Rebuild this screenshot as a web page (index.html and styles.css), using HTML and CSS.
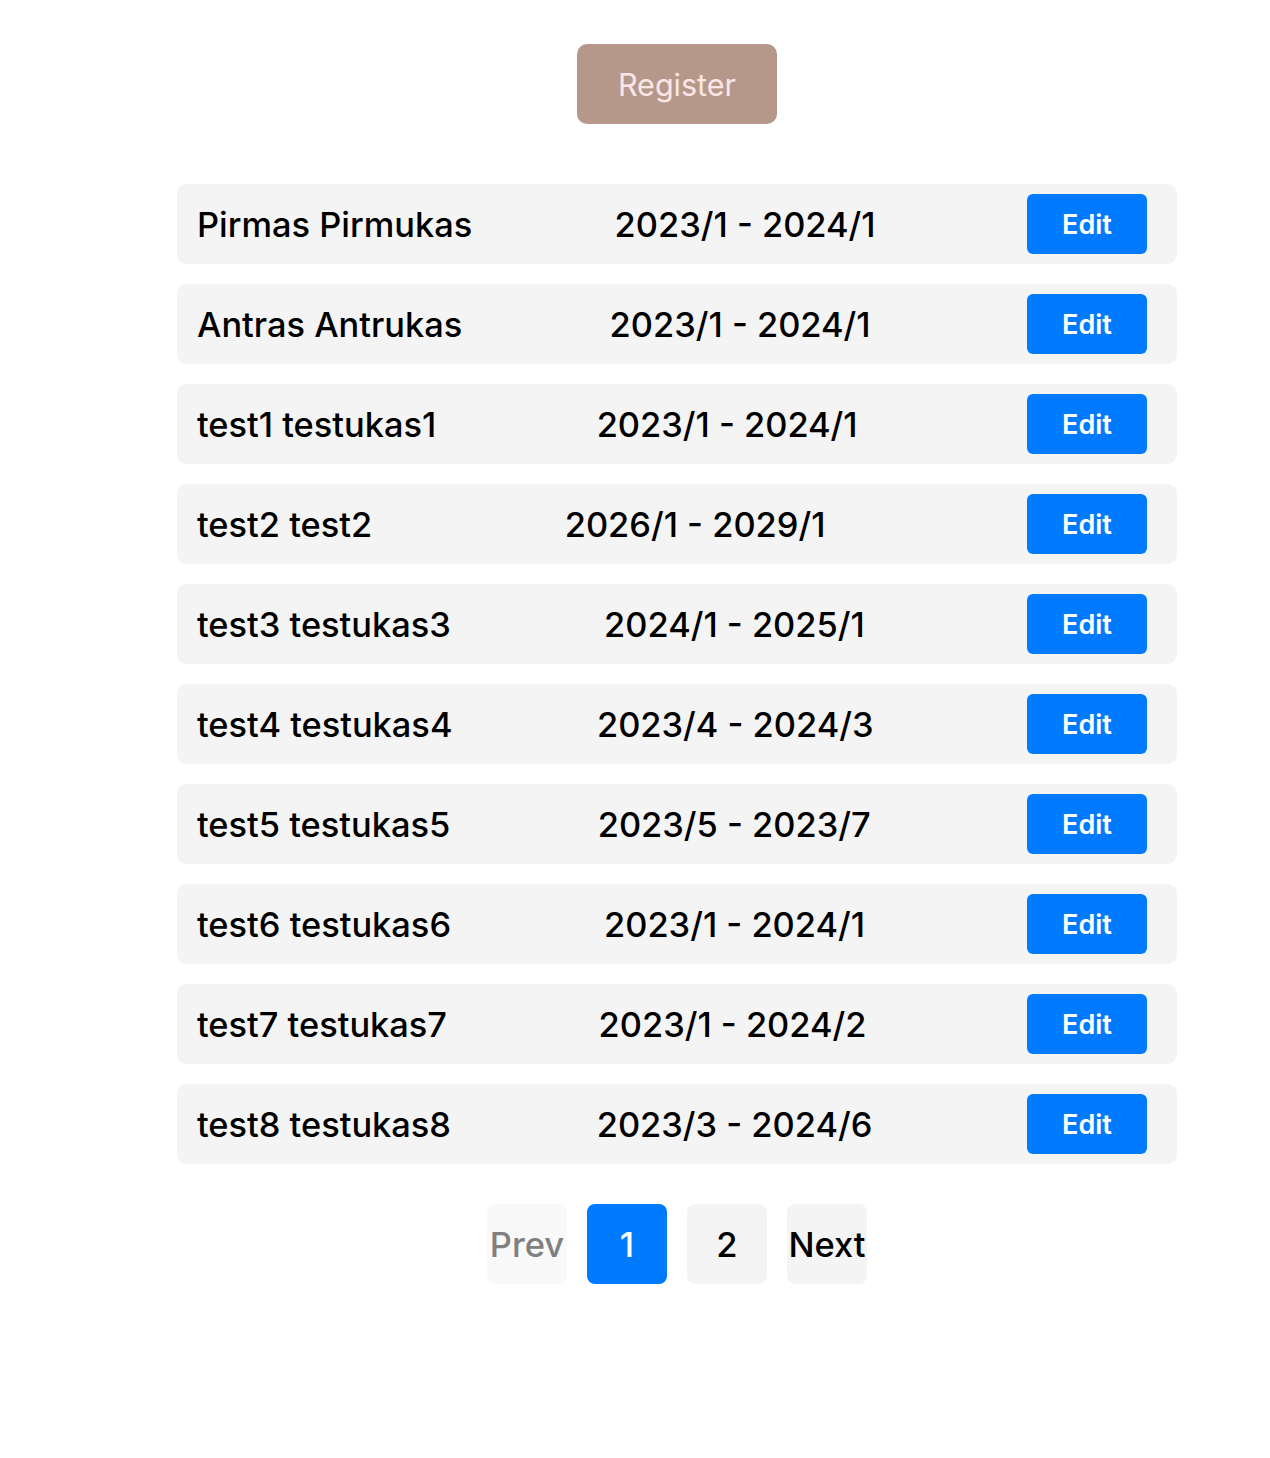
FILE: index.html
```html
<!DOCTYPE html>
<html>
<head>
<meta charset="utf-8">
<link rel="stylesheet" href="styles.css">
</head>
<body>
<main class="page">
  <button class="register">Register</button>
  <ul class="list">
    <li class="row"><span class="name">Pirmas Pirmukas</span><span class="dates">2023/1 - 2024/1</span><button class="edit">Edit</button></li>
    <li class="row"><span class="name">Antras Antrukas</span><span class="dates">2023/1 - 2024/1</span><button class="edit">Edit</button></li>
    <li class="row"><span class="name">test1 testukas1</span><span class="dates">2023/1 - 2024/1</span><button class="edit">Edit</button></li>
    <li class="row"><span class="name">test2 test2</span><span class="dates">2026/1 - 2029/1</span><button class="edit">Edit</button></li>
    <li class="row"><span class="name">test3 testukas3</span><span class="dates">2024/1 - 2025/1</span><button class="edit">Edit</button></li>
    <li class="row"><span class="name">test4 testukas4</span><span class="dates">2023/4 - 2024/3</span><button class="edit">Edit</button></li>
    <li class="row"><span class="name">test5 testukas5</span><span class="dates">2023/5 - 2023/7</span><button class="edit">Edit</button></li>
    <li class="row"><span class="name">test6 testukas6</span><span class="dates">2023/1 - 2024/1</span><button class="edit">Edit</button></li>
    <li class="row"><span class="name">test7 testukas7</span><span class="dates">2023/1 - 2024/2</span><button class="edit">Edit</button></li>
    <li class="row"><span class="name">test8 testukas8</span><span class="dates">2023/3 - 2024/6</span><button class="edit">Edit</button></li>
  </ul>
  <nav class="pager">
    <button class="pg pg-disabled">Prev</button>
    <button class="pg pg-active">1</button>
    <button class="pg">2</button>
    <button class="pg">Next</button>
  </nav>
</main>
</body>
</html>
```
FILE: styles.css
```css
html, body {
  margin: 0;
  padding: 0;
  background: #ffffff;
}
body {
  font-family: Inter, "Noto Sans", sans-serif;
  color: #000;
}
.page {
  width: 1000px;
  margin-left: 177px;
  padding-top: 44px;
  display: flex;
  flex-direction: column;
  align-items: center;
}
button {
  font-family: inherit;
  border: none;
  cursor: pointer;
}
.register {
  width: 200px;
  height: 80px;
  border-radius: 10px;
  background: #b5988a;
  color: #fbe6e6;
  font-size: 30.5px;
  font-weight: 400;
}
.list {
  list-style: none;
  margin: 60px 0 0;
  padding: 0;
  width: 1000px;
  display: flex;
  flex-direction: column;
  gap: 20px;
}
.row {
  height: 80px;
  box-sizing: border-box;
  background: #f4f4f4;
  border-radius: 9px;
  display: flex;
  align-items: center;
  justify-content: space-between;
  padding: 0 30px 0 20px;
  font-size: 34.4px;
  font-weight: 500;
}
.dates {
  margin-right: 9px;
}
.edit {
  width: 120px;
  height: 60px;
  border-radius: 6px;
  background: #007bff;
  color: #fff;
  font-size: 27px;
  font-weight: 600;
}
.pager {
  margin-top: 40px;
  display: flex;
  gap: 20px;
}
.pg {
  width: 80px;
  height: 80px;
  padding: 0;
  border-radius: 8px;
  background: #f4f4f4;
  color: #000;
  font-size: 34.5px;
  font-weight: 500;
}
.pg-disabled {
  background: #f9f9f9;
  color: #808080;
}
.pg-active {
  background: #007bff;
  color: #fff;
}
```
